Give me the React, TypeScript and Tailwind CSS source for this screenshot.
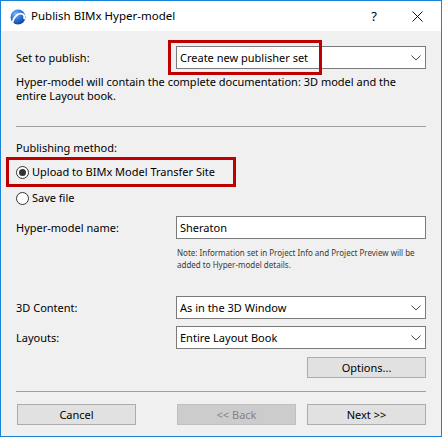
import React from 'react';

const Chevron = () => (
    <svg width="10" height="6" viewBox="0 0 10 6" className="shrink-0">
        <polyline points="0.5,0.5 5,5 9.5,0.5" fill="none" stroke="#4a4a4a" strokeWidth="1" />
    </svg>
);

const Select = ({ value }: { value: string }) => (
    <div className="flex-1 h-[23px] bg-white border border-[#7a7a7a] flex items-center pl-[3px] pr-[4px]">
        <span className="flex-1 whitespace-nowrap">{value}</span>
        <Chevron />
    </div>
);

const Radio = ({ checked }: { checked?: boolean }) => (
    <div className="w-[13px] h-[13px] rounded-full border border-[#333333] bg-white flex items-center justify-center shrink-0">
        {checked && <div className="w-[7px] h-[7px] rounded-full bg-[#333333]" />}
    </div>
);

const Button = ({ label, disabled }: { label: string; disabled?: boolean }) => (
    <div
        className={
            disabled
                ? 'w-[119px] h-[21px] border border-[#bfbfbf] bg-[#cccccc] text-[#838383] flex items-center justify-center'
                : 'w-[119px] h-[21px] border border-[#adadad] bg-[#e1e1e1] text-black flex items-center justify-center'
        }
    >
        {label}
    </div>
);

const AppIcon = () => (
    <svg width="16" height="16" viewBox="0 0 16 16">
        <defs>
            <radialGradient id="ball" cx="35%" cy="30%" r="75%">
                <stop offset="0%" stopColor="#7fb6f5" />
                <stop offset="55%" stopColor="#2a6fd6" />
                <stop offset="100%" stopColor="#123f9a" />
            </radialGradient>
        </defs>
        <circle cx="8" cy="8" r="7.5" fill="url(#ball)" />
        <path d="M2.5 13.5 C4 7 8.5 3.5 12.5 5 C14 5.6 14.6 7.5 14.2 9.5" fill="none" stroke="#ffffff" strokeWidth="1.8" strokeLinecap="round" />
    </svg>
);

export default function App() {
    return (
        <div className="w-[442px] h-[437px] border border-[#1883d7] flex flex-col font-['Segoe_UI','Noto_Sans',sans-serif] text-[11px] leading-[14px] text-black overflow-hidden whitespace-nowrap">
            {/* title bar */}
            <div className="h-[30px] bg-white flex items-center shrink-0">
                <div className="ml-[9px] mt-[1px]">
                    <AppIcon />
                </div>
                <span className="ml-[5px] text-[11.5px] flex-1">Publish BIMx Hyper-model</span>
                <span className="w-[12px] text-center text-[13px] mr-[32px]">?</span>
                <svg width="11" height="11" viewBox="0 0 11 11" className="mr-[18px]">
                    <path d="M0.5 0.5 L10.5 10.5 M10.5 0.5 L0.5 10.5" stroke="#111111" strokeWidth="1" />
                </svg>
            </div>

            {/* body */}
            <div className="flex-1 bg-[#f0f0f0] pl-[15px] pr-[15px] flex flex-col">
                <div className="relative mt-[15px] h-[23px] flex items-center">
                    <span className="w-[160px]">Set to publish:</span>
                    <Select value="Create new publisher set" />
                    <div className="absolute left-[152px] top-[-6px] w-[154px] h-[35px] border-[3px] border-[#c00000]" />
                </div>

                <p className="mt-[6px] leading-[14px]">
                    Hyper-model will contain the complete documentation: 3D model and the
                    <br />
                    entire Layout book.
                </p>

                <div className="mt-[23px] h-px bg-[#a0a0a0]" />

                <div className="mt-[14px] h-[14px]">Publishing method:</div>

                <div className="relative mt-[7px] h-[20px] flex items-center">
                    <Radio checked />
                    <span className="ml-[3px]">Upload to BIMx Model Transfer Site</span>
                    <div className="absolute left-[-10px] top-[-5px] w-[230px] h-[30px] border-[3px] border-[#c00000]" />
                </div>

                <div className="mt-[6px] h-[20px] flex items-center">
                    <Radio />
                    <span className="ml-[3px]">Save file</span>
                </div>

                <div className="mt-[8px] h-[23px] flex items-center">
                    <span className="w-[160px]">Hyper-model name:</span>
                    <div className="flex-1 h-[23px] bg-white border border-[#7a7a7a] flex items-center pl-[3px]">Sheraton</div>
                </div>

                <div className="mt-[8px] h-[24px] pl-[161px] text-[8px] leading-[12px] text-[#3a3a3a]">
                    Note: Information set in Project Info and Project Preview will be
                    <br />
                    added to Hyper-model details.
                </div>

                <div className="mt-[25px] h-[23px] flex items-center">
                    <span className="w-[160px]">3D Content:</span>
                    <Select value="As in the 3D Window" />
                </div>

                <div className="mt-[7px] h-[23px] flex items-center">
                    <span className="w-[160px]">Layouts:</span>
                    <Select value="Entire Layout Book" />
                </div>

                <div className="mt-[8px] flex justify-end">
                    <Button label="Options..." />
                </div>

                <div className="mt-[13px] h-px bg-[#a0a0a0]" />

                <div className="mt-[12px] flex justify-between pl-[1px]">
                    <Button label="Cancel" />
                    <div className="flex gap-[11px]">
                        <Button label="<< Back" disabled />
                        <Button label="Next >>" />
                    </div>
                </div>
            </div>
        </div>
    );
}
